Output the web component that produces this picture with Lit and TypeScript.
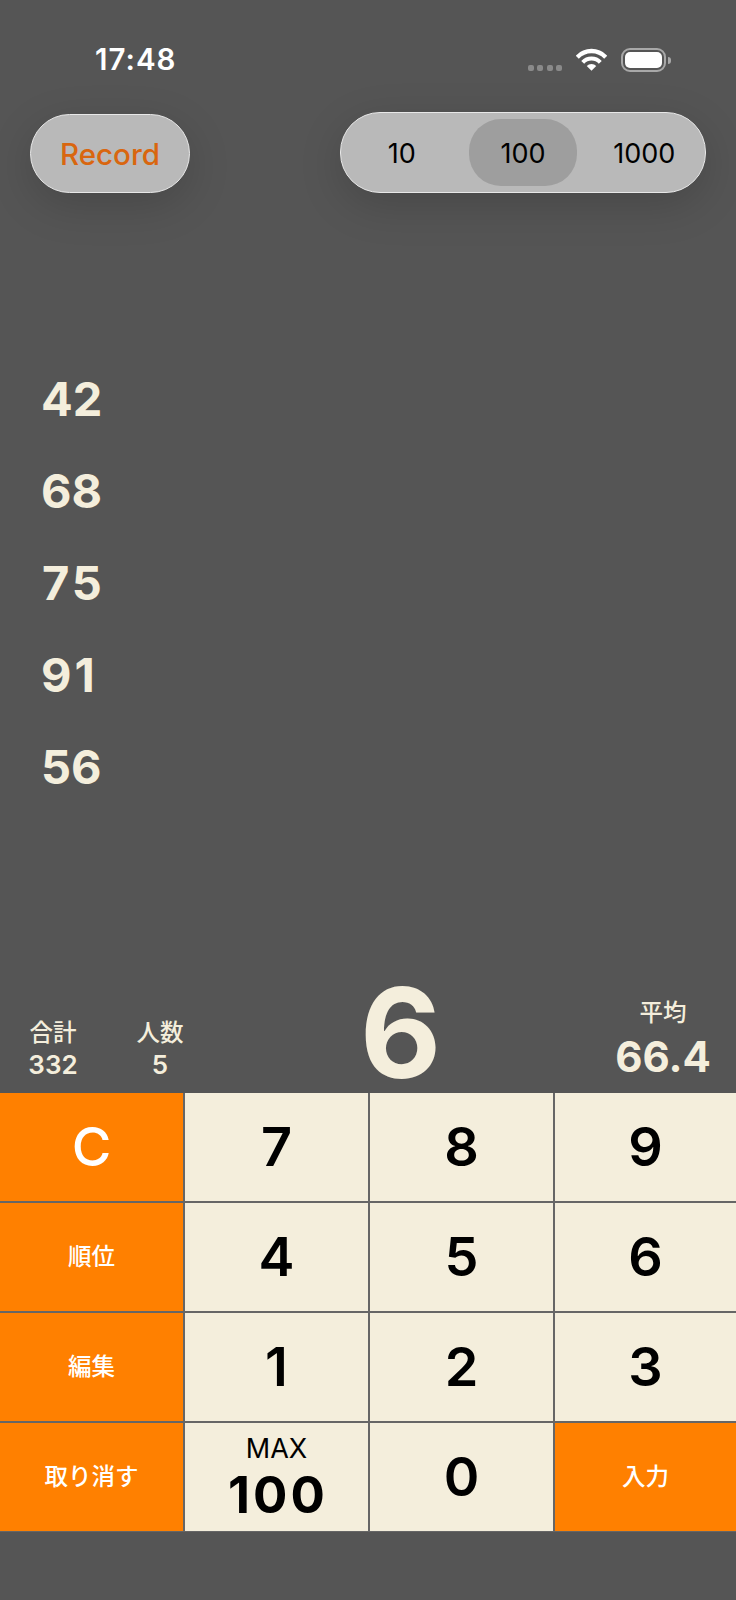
import { LitElement, html, css, nothing } from "lit";
import { customElement } from "lit/decorators.js";

type Key = { label?: string; kind: "num" | "act" | "txt" | "max" };

const KEYS: Key[] = [
  { label: "C", kind: "act" },
  { label: "7", kind: "num" },
  { label: "8", kind: "num" },
  { label: "9", kind: "num" },
  { label: "順位", kind: "txt" },
  { label: "4", kind: "num" },
  { label: "5", kind: "num" },
  { label: "6", kind: "num" },
  { label: "編集", kind: "txt" },
  { label: "1", kind: "num" },
  { label: "2", kind: "num" },
  { label: "3", kind: "num" },
  { label: "取り消す", kind: "txt" },
  { kind: "max" },
  { label: "0", kind: "num" },
  { label: "入力", kind: "txt" },
];

@customElement("app-root")
export class AppRoot extends LitElement {
  static styles = css`
    :host {
      display: block;
      width: 736px;
      height: 1600px;
      background: #555555;
      overflow: hidden;
      font-family: Inter, "Noto Sans CJK JP", sans-serif;
      color: #f4eedc;
    }
    .page { display: flex; flex-direction: column; height: 1600px; }

    .status {
      height: 112px;
      box-sizing: border-box;
      padding: 42px 65px 0 95px;
      display: flex;
      align-items: flex-start;
      justify-content: space-between;
      color: #fff;
    }
    .time { font-size: 29.5px; font-weight: 600; line-height: 35px; letter-spacing: 1px; }
    .sys { display: flex; align-items: flex-start; padding-top: 6px; }
    .dots { display: flex; gap: 3.5px; margin-top: 17px; margin-right: 14px; }
    .dots i { width: 6px; height: 6px; border-radius: 2px; background: #8a8a8a; }
    .wifi { width: 31px; height: 23px; margin-right: 14px; display: block; }
    .batt { display: flex; align-items: center; }
    .batt .shell {
      width: 45px; height: 24px; box-sizing: border-box;
      border: 2px solid #a8a8a8; border-radius: 9px; padding: 2px;
    }
    .batt .fill { width: 100%; height: 100%; background: #fff; border-radius: 5px; }
    .batt .tip {
      width: 3px; height: 7px; margin-left: 2px;
      background: #a8a8a8; border-radius: 0 3px 3px 0;
    }

    .top {
      height: 81px;
      padding: 0 30px 0 30px;
      display: flex;
      align-items: flex-end;
      justify-content: space-between;
    }
    .pill {
      box-sizing: border-box;
      background: #b9b9b9;
      border: 1.5px solid #e8e8e8;
      box-shadow: 0 12px 44px rgba(0, 0, 0, 0.16);
    }
    .record {
      width: 160px; height: 79px; border-radius: 40px;
      display: flex; align-items: center; justify-content: center;
      font-size: 29.5px; color: #d9660f; font-weight: 500;
    }
    .seg {
      width: 366px; height: 81px; border-radius: 40px;
      display: grid; grid-template-columns: repeat(3, 1fr);
      align-items: stretch;
      padding: 6px 0;
      color: #000;
      font-size: 27px;
    }
    .seg div {
      display: flex; align-items: center; justify-content: center;
      margin: 0 7px; border-radius: 32px;
      padding-top: 2px;
    }
    .seg .on { background: #9e9e9e; }

    .list {
      margin-top: 160px;
      padding-left: 41px;
      flex: 1;
      display: flex;
      flex-direction: column;
      font-size: 47px;
      font-weight: 700;
      line-height: 92px;
    }
    .list .w { letter-spacing: 3px; }
    .list .s { padding-left: 1px; }

    .info {
      height: 95px;
      padding: 0 27px 0 29px;
      display: flex;
      align-items: flex-end;
    }
    .stat { display: flex; flex-direction: column; align-items: center; width: 48px; margin-bottom: 12px; }
    .stat + .stat { margin-left: 59px; }
    .stat .k { font-size: 23.5px; font-weight: 500; line-height: 33px; }
    .stat .v { font-size: 26px; font-weight: 600; line-height: 32px; }
    .cur {
      font-size: 125px; font-weight: 700; line-height: 110px;
      flex: 1; text-align: center;
      margin-bottom: 5px;
    }
    .avg { display: flex; flex-direction: column; align-items: center; width: 92px; margin-bottom: 12px; }
    .avg .k { font-size: 23.5px; font-weight: 500; line-height: 30px; margin-bottom: 5px; }
    .avg .v { font-size: 42px; font-weight: 700; line-height: 48px; }

    .grid {
      display: grid;
      grid-template-columns: 183px 183px 183px 1fr;
      grid-auto-rows: 108px;
      gap: 2px;
      background: #666666;
      padding: 0 0 1px 0;
    }
    .key {
      display: flex; flex-direction: column;
      align-items: center; justify-content: center;
      background: #f4eedc; color: #000;
      font-size: 54px; font-weight: 600;
      min-width: 0;
      padding-bottom: 1px;
      box-sizing: border-box;
    }
    .act, .txt { background: #ff8000; color: #fff; }
    .act { font-weight: 500; }
    .txt { font-size: 23.5px; font-weight: 500; padding-bottom: 5px; }
    .max { padding: 3px 0 0; }
    .max-l { font-size: 27px; font-weight: 400; line-height: 32px; margin-bottom: 4px; margin-top: -4px; }
    .max-v { font-size: 51px; font-weight: 700; line-height: 52px; letter-spacing: 3px; padding-left: 3px; }
    .rest { flex: none; height: 68px; }
  `;

  private keyTpl(k: Key) {
    if (k.kind === "max") {
      return html`<div class="key max"><span class="max-l">MAX</span><span class="max-v">100</span></div>`;
    }
    return html`<div class="key ${k.kind}">${k.label ?? nothing}</div>`;
  }

  render() {
    return html`
      <div class="page">
        <div class="status">
          <div class="time">17:48</div>
          <div class="sys">
            <div class="dots"><i></i><i></i><i></i><i></i></div>
            <svg class="wifi" viewBox="0 0 31 23" fill="none">
              <path d="M1.24 9.2A19.5 19.5 0 0 1 29.76 9.2" stroke="#fff" stroke-width="4.3" />
              <path d="M6.72 14.32A12 12 0 0 1 24.28 14.32" stroke="#fff" stroke-width="4" />
              <path d="M15.5 22.8L10.75 18.07A6.5 6.5 0 0 1 20.25 18.07Z" fill="#fff" />
            </svg>
            <div class="batt">
              <div class="shell"><div class="fill"></div></div>
              <div class="tip"></div>
            </div>
          </div>
        </div>

        <div class="top">
          <div class="pill record">Record</div>
          <div class="pill seg">
            <div>10</div>
            <div class="on">100</div>
            <div>1000</div>
          </div>
        </div>

        <div class="list">
          <div>42</div>
          <div>68</div>
          <div class="w s">75</div>
          <div class="w">91</div>
          <div>56</div>
        </div>

        <div class="info">
          <div class="stat"><span class="k">合計</span><span class="v">332</span></div>
          <div class="stat"><span class="k">人数</span><span class="v">5</span></div>
          <div class="cur">6</div>
          <div class="avg"><span class="k">平均</span><span class="v">66.4</span></div>
        </div>

        <div class="grid">${KEYS.map((k) => this.keyTpl(k))}</div>
        <div class="rest"></div>
      </div>
    `;
  }
}
